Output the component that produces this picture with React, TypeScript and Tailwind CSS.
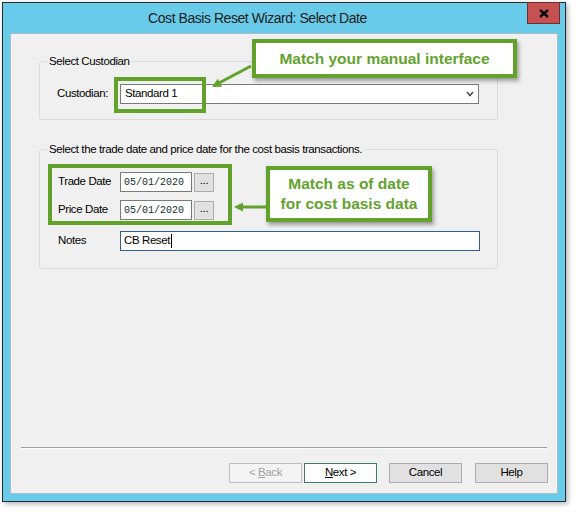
import React from 'react'

const green = '#62a12a'

function GroupBox({ label, children }: { label: string; children: React.ReactNode }) {
  return (
    <div className="ml-[28px] w-[459px] flex flex-col border border-[#d5dbe0] rounded-[3px]">
      <div className="-mt-[9px] ml-[7px] self-start px-[2px] bg-[#f0f0f0] leading-[16px]">{label}</div>
      {children}
    </div>
  )
}

function DateField({ label, value, top }: { label: string; value: string; top: string }) {
  return (
    <div className={`flex items-center pl-[18px] ${top}`}>
      <span className="w-[62px]">{label}</span>
      <div className="w-[72px] h-[20px] flex items-center pl-[3px] bg-white border border-[#7a7a7a] text-[10px] text-[#10302c] font-['Liberation_Mono',monospace] tracking-[0px]">
        {value}
      </div>
      <button className="ml-[2px] w-[20px] h-[19px] flex items-center justify-center pb-[2px] bg-[#e1e1e1] border border-[#adadad]">...</button>
    </div>
  )
}

export default function App() {
  return (
    <div className="relative w-[576px] h-[512px] overflow-hidden bg-white pt-[2px] pl-[2px] font-['Liberation_Sans',Arial,sans-serif] text-[11.5px] tracking-[-0.4px] text-black">
      {/* Wizard window */}
      <div className="w-[564px] h-[500px] flex flex-col border border-[#2b2b2b] bg-[#68cbe9] px-[7px] pb-[7px] shadow-[2px_2px_5px_rgba(0,0,0,0.3)]">
        <div className="h-[30px] -mx-[7px] flex items-start">
          <div className="flex-1 pr-[15px] text-center text-[14px] tracking-[-0.45px] leading-[30px] text-[#1c1c1c]">
            Cost Basis Reset Wizard: Select Date
          </div>
          <button className="mr-[5px] -mt-[1px] w-[33px] h-[22px] flex items-center justify-center bg-[#c75050] border border-[#6e2e2e]">
            <svg width="10" height="9" viewBox="0 0 10 9">
              <path d="M1 1 L9 8 M9 1 L1 8" stroke="#000" strokeWidth="2.4" />
            </svg>
          </button>
        </div>

        <div className="flex-1 flex flex-col bg-[#f0f0f0] border border-[#a9bcc7] pt-[27px] pb-[10px]">
          <GroupBox label="Select Custodian">
            <div className="mt-[15px] mb-[15px] flex items-center pl-[17px]">
              <span className="w-[63px]">Custodian:</span>
              <div className="w-[359px] h-[20px] flex items-center justify-between pl-[4px] pr-[4px] bg-white border border-[#7a7a7a]">
                <span>Standard 1</span>
                <svg width="8" height="6" viewBox="0 0 8 6">
                  <path d="M1 1 L4 4.5 L7 1" stroke="#4a4a4a" strokeWidth="1.6" fill="none" />
                </svg>
              </div>
            </div>
          </GroupBox>

          <div className="mt-[29px]">
            <GroupBox label="Select the trade date and price date for the cost basis transactions.">
              <DateField label="Trade Date" value="05/01/2020" top="mt-[15px]" />
              <DateField label="Price Date" value="05/01/2020" top="mt-[8px]" />
              <div className="mt-[11px] mb-[17px] flex items-center pl-[18px]">
                <span className="w-[62px]">Notes</span>
                <div className="w-[360px] h-[20px] flex items-center pl-[3px] bg-white border border-[#2f5f8a]">
                  CB Reset<span className="ml-[1px] w-[1px] h-[14px] bg-black" />
                </div>
              </div>
            </GroupBox>
          </div>

          <div className="flex-1" />

          <div className="ml-[10px] w-[526px] h-[2px] border-t border-[#a0a0a0] bg-white" />

          <div className="mt-[14px] mr-[9px] flex justify-end">
            <button className="w-[73px] h-[20px] border border-[#bfbfbf] bg-[#f4f4f4] text-[#a0a0a0]">
              &lt; <span className="underline">B</span>ack
            </button>
            <button className="ml-[2px] w-[73px] h-[20px] border border-[#3f7a6a] bg-[#fdfdfd]">
              <span className="underline">N</span>ext &gt;
            </button>
            <button className="ml-[12px] w-[73px] h-[20px] border border-[#adadad] bg-[#e1e1e1]">Cancel</button>
            <button className="ml-[13px] w-[73px] h-[20px] border border-[#adadad] bg-[#e1e1e1]">Help</button>
          </div>
        </div>
      </div>

      {/* Annotation overlays */}
      <div className="absolute left-[114px] top-[77px] w-[92px] h-[36px] border-[4px] border-[#62a12a]" />
      <div className="absolute left-[48px] top-[164px] w-[184px] h-[61px] border-[4px] border-[#62a12a]" />

      <div className="absolute left-[252px] top-[39px] w-[265px] h-[39px] flex items-center justify-center bg-white border-[4px] border-[#62a12a] shadow-[2px_3px_4px_rgba(0,0,0,0.35)] text-[15.5px] tracking-[0px] font-bold text-[#64a22e]">
        Match your manual interface
      </div>
      <div className="absolute left-[266px] top-[166px] w-[166px] h-[56px] flex flex-col items-center justify-center bg-white border-[4px] border-[#62a12a] shadow-[2px_3px_4px_rgba(0,0,0,0.35)] text-[15.5px] leading-[20px] tracking-[0px] font-bold text-[#64a22e]">
        <span>Match as of date</span>
        <span>for cost basis data</span>
      </div>

      <svg className="absolute left-0 top-0 pointer-events-none" width="576" height="512">
        <line x1="251" y1="66" x2="218" y2="83.5" stroke={green} strokeWidth="3" />
        <polygon points="212,87 222,86.7 217.8,78.7" fill={green} />
        <line x1="266" y1="207" x2="241" y2="207" stroke={green} strokeWidth="3" />
        <polygon points="234,207 243,202.5 243,211.5" fill={green} />
      </svg>
    </div>
  )
}
